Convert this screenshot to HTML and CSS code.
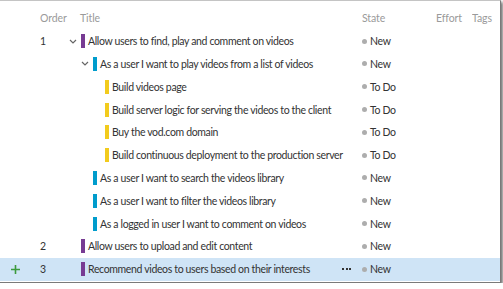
FILE: index.html
```html
<!DOCTYPE html>
<html lang="en">
<head>
    <meta charset="UTF-8">
    <title>Backlog</title>
    <link rel="stylesheet" href="styles.css">
</head>
<body>
    <div class="frame">
        <div class="row header">
            <div class="cell add"></div>
            <div class="cell order">Order</div>
            <div class="cell title"><span class="head-title">Title</span></div>
            <div class="cell state">State</div>
            <div class="cell effort">Effort</div>
            <div class="cell tags">Tags</div>
        </div>

        <div class="row">
            <div class="cell add"></div>
            <div class="cell order">1</div>
            <div class="cell title level-0">
                <span class="toggle"><svg width="8" height="5" viewBox="0 0 8 5"><path d="M1 1 L4 4 L7 1" fill="none" stroke="#666" stroke-width="1.2"/></svg></span>
                <span class="bar feature"></span>
                <span class="text">Allow users to find, play and comment on videos</span>
            </div>
            <div class="cell state"><span class="dot"></span>New</div>
            <div class="cell effort"></div>
            <div class="cell tags"></div>
        </div>

        <div class="row">
            <div class="cell add"></div>
            <div class="cell order"></div>
            <div class="cell title level-1">
                <span class="toggle"><svg width="8" height="5" viewBox="0 0 8 5"><path d="M1 1 L4 4 L7 1" fill="none" stroke="#666" stroke-width="1.2"/></svg></span>
                <span class="bar story"></span>
                <span class="text">As a user I want to play videos from a list of videos</span>
            </div>
            <div class="cell state"><span class="dot"></span>New</div>
            <div class="cell effort"></div>
            <div class="cell tags"></div>
        </div>

        <div class="row">
            <div class="cell add"></div>
            <div class="cell order"></div>
            <div class="cell title level-2">
                <span class="toggle"></span>
                <span class="bar task"></span>
                <span class="text">Build videos page</span>
            </div>
            <div class="cell state"><span class="dot"></span>To Do</div>
            <div class="cell effort"></div>
            <div class="cell tags"></div>
        </div>

        <div class="row">
            <div class="cell add"></div>
            <div class="cell order"></div>
            <div class="cell title level-2">
                <span class="toggle"></span>
                <span class="bar task"></span>
                <span class="text">Build server logic for serving the videos to the client</span>
            </div>
            <div class="cell state"><span class="dot"></span>To Do</div>
            <div class="cell effort"></div>
            <div class="cell tags"></div>
        </div>

        <div class="row">
            <div class="cell add"></div>
            <div class="cell order"></div>
            <div class="cell title level-2">
                <span class="toggle"></span>
                <span class="bar task"></span>
                <span class="text">Buy the vod.com domain</span>
            </div>
            <div class="cell state"><span class="dot"></span>To Do</div>
            <div class="cell effort"></div>
            <div class="cell tags"></div>
        </div>

        <div class="row">
            <div class="cell add"></div>
            <div class="cell order"></div>
            <div class="cell title level-2">
                <span class="toggle"></span>
                <span class="bar task"></span>
                <span class="text">Build continuous deployment to the production server</span>
            </div>
            <div class="cell state"><span class="dot"></span>To Do</div>
            <div class="cell effort"></div>
            <div class="cell tags"></div>
        </div>

        <div class="row">
            <div class="cell add"></div>
            <div class="cell order"></div>
            <div class="cell title level-1">
                <span class="toggle"></span>
                <span class="bar story"></span>
                <span class="text">As a user I want to search the videos library</span>
            </div>
            <div class="cell state"><span class="dot"></span>New</div>
            <div class="cell effort"></div>
            <div class="cell tags"></div>
        </div>

        <div class="row">
            <div class="cell add"></div>
            <div class="cell order"></div>
            <div class="cell title level-1">
                <span class="toggle"></span>
                <span class="bar story"></span>
                <span class="text">As a user I want to filter the videos library</span>
            </div>
            <div class="cell state"><span class="dot"></span>New</div>
            <div class="cell effort"></div>
            <div class="cell tags"></div>
        </div>

        <div class="row">
            <div class="cell add"></div>
            <div class="cell order"></div>
            <div class="cell title level-1">
                <span class="toggle"></span>
                <span class="bar story"></span>
                <span class="text">As a logged in user I want to comment on videos</span>
            </div>
            <div class="cell state"><span class="dot"></span>New</div>
            <div class="cell effort"></div>
            <div class="cell tags"></div>
        </div>

        <div class="row">
            <div class="cell add"></div>
            <div class="cell order">2</div>
            <div class="cell title level-0">
                <span class="toggle"></span>
                <span class="bar feature"></span>
                <span class="text">Allow users to upload and edit content</span>
            </div>
            <div class="cell state"><span class="dot"></span>New</div>
            <div class="cell effort"></div>
            <div class="cell tags"></div>
        </div>

        <div class="row selected">
            <div class="cell add">
                <svg width="9" height="9" viewBox="0 0 9 9"><path d="M4.5 0 V9 M0 4.5 H9" stroke="#3c9a3c" stroke-width="1.6"/></svg>
            </div>
            <div class="cell order">3</div>
            <div class="cell title level-0">
                <span class="toggle"></span>
                <span class="bar feature"></span>
                <span class="text">Recommend videos to users based on their interests</span>
                <span class="more"><i></i><i></i><i></i></span>
            </div>
            <div class="cell state"><span class="dot"></span>New</div>
            <div class="cell effort"></div>
            <div class="cell tags"></div>
        </div>
    </div>
</body>
</html>
```

FILE: styles.css
```css
* {
    box-sizing: border-box;
    margin: 0;
    padding: 0;
}

body {
    background: white;
    font-family: Lato, "Noto Sans", sans-serif;
    font-size: 10.5px;
    letter-spacing: -0.35px;
    color: #333;
}

.frame {
    width: 501px;
    height: 283px;
    padding-top: 6px;
    background: white;
    border-top: 1px solid #c4c4c4;
    border-right: 1px solid #7a7a7a;
    border-bottom: 1px solid #7a7a7a;
    box-shadow: 2px 2px 3px rgba(0, 0, 0, 0.55);
}

.row {
    display: flex;
    align-items: center;
    height: 22.8px;
}

.row.selected {
    background: #cfe4f6;
}

.header {
    color: #9a9a9a;
    font-size: 10.5px;
    letter-spacing: -0.1px;
}

.cell {
    display: flex;
    align-items: center;
    flex-shrink: 0;
    height: 100%;
    white-space: nowrap;
    overflow: hidden;
}

.add {
    width: 39px;
    padding-left: 11px;
}

.order {
    width: 29px;
    padding-left: 1px;
}

.title {
    width: 294px;
}

.head-title {
    padding-left: 12px;
}

.level-1 {
    padding-left: 12px;
}

.level-2 {
    padding-left: 24px;
}

.toggle {
    width: 13px;
    flex-shrink: 0;
    display: flex;
    align-items: center;
    padding-left: 1px;
}

.bar {
    width: 4px;
    height: 14px;
    flex-shrink: 0;
    margin-right: 3px;
}

.feature {
    background: #773b93;
}

.story {
    background: #009ccc;
}

.task {
    background: #f2cb1d;
}

.more {
    display: flex;
    gap: 1.5px;
    margin-left: auto;
    margin-right: 11px;
}

.more i {
    width: 2px;
    height: 2px;
    background: #333;
}

.state {
    width: 74px;
}

.dot {
    width: 5px;
    height: 5px;
    flex-shrink: 0;
    border-radius: 50%;
    background: #adadad;
    margin-right: 3px;
}

.effort {
    width: 36px;
}

.tags {
    flex: 1;
}
```
